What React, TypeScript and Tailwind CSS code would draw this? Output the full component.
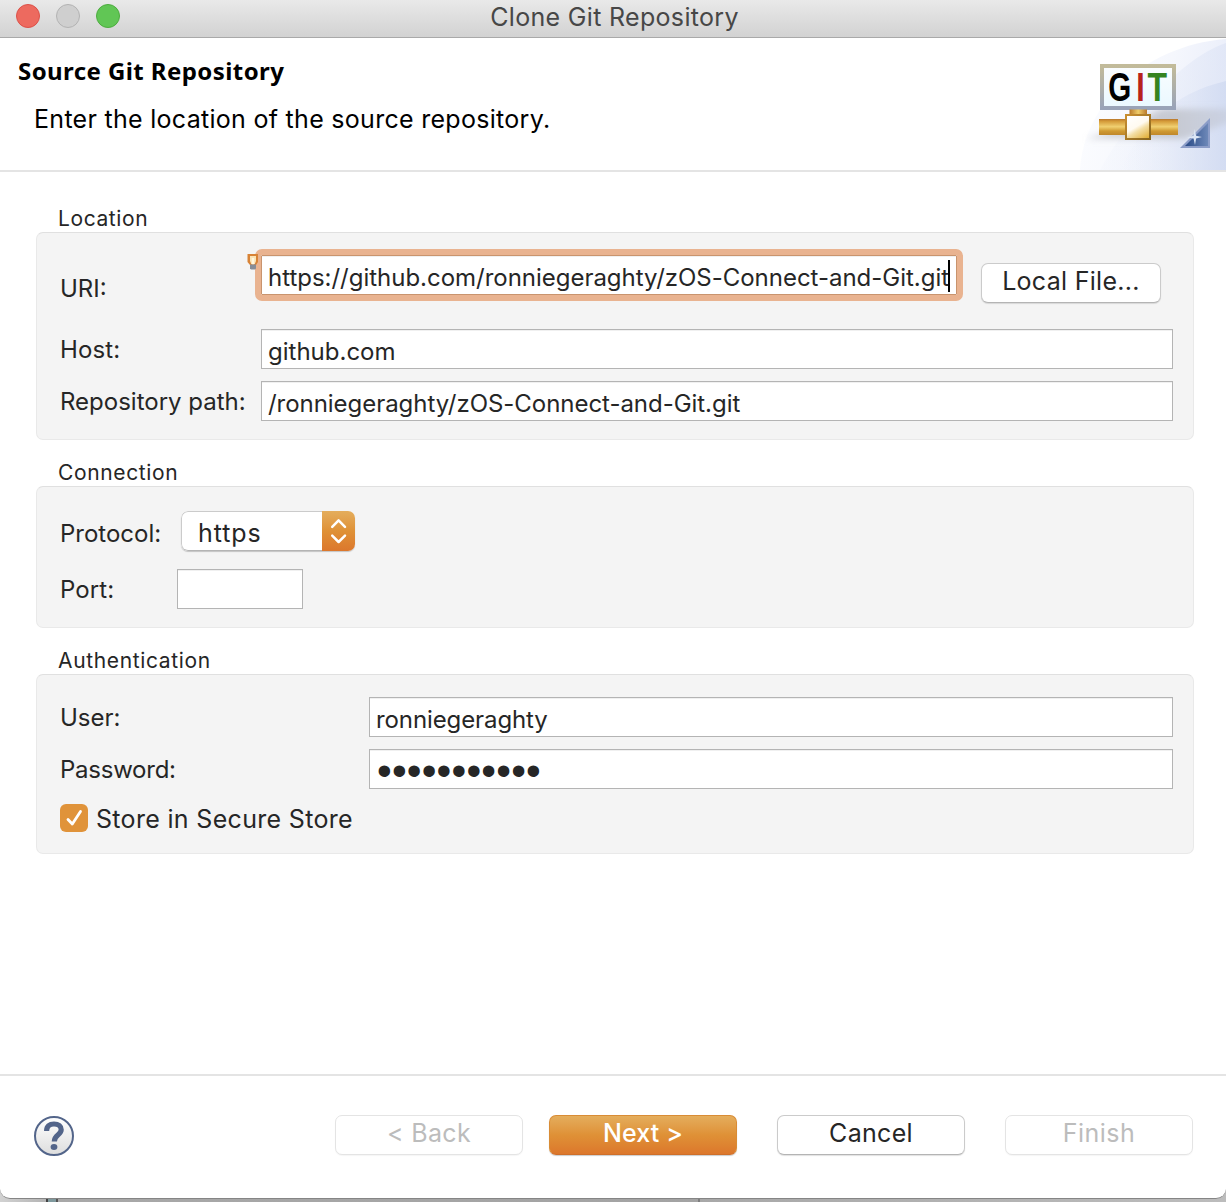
import React from "react";
import type { ReactNode } from "react";

function Group({ title, titleClass, className, children }: { title: string; titleClass: string; className: string; children: ReactNode }) {
  return (
    <section className="flex flex-col">
      <h2 className={`h-[28px] pl-[22px] text-[21px] leading-[30px] ${titleClass}`}>{title}</h2>
      <div className={`rounded-[7px] border border-[#e9e9e9] border-t-[#e0e0e0] bg-[#f4f4f4] pl-[23px] pr-5 ${className}`}>{children}</div>
    </section>
  );
}

function Field({ className, children }: { className: string; children?: ReactNode }) {
  return (
    <div className={`flex h-10 items-center border border-[#b4b4b4] bg-white pl-[6px] pt-[5px] text-2xl leading-8 whitespace-nowrap shadow-[inset_0_1px_0_#f0f0f0] ${className}`}>
      {children}
    </div>
  );
}

function Button({ className, children }: { className: string; children: ReactNode }) {
  return (
    <button className={`flex h-10 items-center justify-center rounded-[7px] border pb-[5px] text-[25px] leading-8 whitespace-nowrap ${className}`}>
      {children}
    </button>
  );
}

function Banner() {
  return (
    <svg className="block h-[132px] w-[146px]" viewBox="0 0 146 132">
      <defs>
        <linearGradient id="disc" x1="0" x2="1" y1="0.2" y2="0.4">
          <stop offset="0" stopColor="#fcfdff" />
          <stop offset="0.6" stopColor="#f5f7fd" />
          <stop offset="1" stopColor="#eaeefa" />
        </linearGradient>
        <linearGradient id="disc2" x1="0" x2="1">
          <stop offset="0" stopColor="#eef2fb" stopOpacity="0.3" />
          <stop offset="1" stopColor="#dce3f5" />
        </linearGradient>
        <linearGradient id="disc3" x1="0" x2="1">
          <stop offset="0" stopColor="#e8edf9" stopOpacity="0" />
          <stop offset="1" stopColor="#d0daf1" />
        </linearGradient>
        <linearGradient id="frame" x1="0" x2="0" y1="0" y2="1">
          <stop offset="0" stopColor="#c2bb9a" />
          <stop offset="1" stopColor="#99a3b8" />
        </linearGradient>
        <linearGradient id="glass" x1="0" x2="0" y1="0" y2="1">
          <stop offset="0" stopColor="#fafdff" />
          <stop offset="1" stopColor="#eaf8ff" />
        </linearGradient>
        <linearGradient id="pipe" x1="0" x2="0" y1="0" y2="1">
          <stop offset="0" stopColor="#b9772c" />
          <stop offset="0.15" stopColor="#d59c3a" />
          <stop offset="0.48" stopColor="#f0d071" />
          <stop offset="0.75" stopColor="#d09a32" />
          <stop offset="1" stopColor="#bf872b" />
        </linearGradient>
        <linearGradient id="stem" x1="0" x2="1">
          <stop offset="0" stopColor="#b9782a" />
          <stop offset="0.5" stopColor="#efcc68" />
          <stop offset="1" stopColor="#b9782a" />
        </linearGradient>
        <linearGradient id="boxEdge" x1="0" x2="1" y1="0" y2="1">
          <stop offset="0" stopColor="#c98f31" />
          <stop offset="1" stopColor="#87651e" />
        </linearGradient>
        <linearGradient id="box" x1="0.2" x2="0.8" y1="0" y2="1">
          <stop offset="0" stopColor="#ffffff" />
          <stop offset="0.46" stopColor="#fffaf0" />
          <stop offset="0.62" stopColor="#f4dfa6" />
          <stop offset="1" stopColor="#e2b13d" />
        </linearGradient>
        <linearGradient id="tri" x1="0" x2="1">
          <stop offset="0" stopColor="#284a86" />
          <stop offset="1" stopColor="#6d88b8" />
        </linearGradient>
        <linearGradient id="shade" x1="0" x2="1">
          <stop offset="0" stopColor="#b8bac0" stopOpacity="0.5" />
          <stop offset="0.6" stopColor="#b8bac0" stopOpacity="0.7" />
          <stop offset="1" stopColor="#bfc3cf" stopOpacity="0.45" />
        </linearGradient>
        <filter id="soft" x="-20%" y="-50%" width="140%" height="200%">
          <feGaussianBlur stdDeviation="3" />
        </filter>
      </defs>
      <path d="M0 132C3 70 60 8 146 1V132Z" fill="url(#disc)" />
      <path d="M20 132C40 95 95 22 146 5V132Z" fill="url(#disc2)" opacity="0.65" />
      <path d="M40 132C60 90 90 56 146 43V132Z" fill="url(#disc3)" opacity="0.8" />
      <path d="M6 101L50 86L80 71H150V84L104 101Z" fill="url(#shade)" filter="url(#soft)" />
      <rect x="22" y="28" width="72" height="42" fill="url(#glass)" stroke="url(#frame)" strokeWidth="4" />
      <rect x="49.5" y="71.5" width="17.5" height="6" fill="url(#stem)" />
      <rect x="19" y="81" width="79" height="16" fill="url(#pipe)" />
      <rect x="46" y="77" width="24" height="24" fill="url(#box)" stroke="url(#boxEdge)" strokeWidth="2" />
      <g fontFamily="Liberation Sans, sans-serif" fontWeight="700" fontSize="40">
        <text transform="translate(28.2 63) scale(0.74 1)" fill="#000000">G</text>
        <text transform="translate(56.2 63) scale(0.76 1)" fill="#b7221d">I</text>
        <text transform="translate(67.6 63) scale(0.8 1)" fill="#35831f">T</text>
      </g>
      <path d="M130 80V110H100Z" fill="#8c9dc8" />
      <path d="M128 85V108H105Z" fill="url(#tri)" />
      <path d="M114.6 91L116.1 97.8L122 99L116.1 100.4L115 107L113.6 100.4L107 99.6L113.6 97.8Z" fill="#dce6f5" />
    </svg>
  );
}

export default function App() {
  return (
    <div className="flex h-[1202px] w-[1226px] flex-col bg-[linear-gradient(90deg,#d2d2d2_0,#b4b4b4_46px,#444_46px,#444_48px,#7f999d_48px,#7f999d_56px,#555_56px,#555_58px,#a8a8a8_58px,#a3a3a3_698px,#7f7f7f_698px,#7f7f7f_700px,#a8a8a8_700px,#bcbcbc_1226px)] font-[Inter,sans-serif] text-[#262626]">
      <main className="flex h-[1199px] flex-col overflow-hidden rounded-b-[10px] border-b border-[#858585] bg-white">
        <header className="grid h-[38px] shrink-0 grid-cols-[1fr_auto_1fr] border-b border-[#a9a9a9] bg-linear-to-b from-[#e9e9e9] to-[#d2d2d2]">
          <div className="flex gap-4 pl-4 pt-1">
            <span className="size-6 rounded-full border border-[#dc5149] bg-[#ed6a5f]" />
            <span className="size-6 rounded-full border border-[#b3b3b3] bg-[#cfcfcf]" />
            <span className="size-6 rounded-full border border-[#4dac3f] bg-[#61c655]" />
          </div>
          <h1 className="pl-[3px] text-[25px] leading-[34px] tracking-[0.32px] text-[#474747]">Clone Git Repository</h1>
        </header>

        <div className="flex h-[134px] shrink-0 justify-between border-b-2 border-[#e4e4e4]">
          <div className="flex flex-col text-black">
            <p className="pl-[18px] pt-[17px] font-['Noto_Sans',sans-serif] text-2xl leading-8 font-bold tracking-[0.42px]">Source Git Repository</p>
            <p className="pl-[34px] pt-4 text-[25px] leading-8 tracking-[0.29px]">Enter the location of the source repository.</p>
          </div>
          <Banner />
        </div>

        <div className="flex grow flex-col gap-[18px] px-8 pl-9 pt-8">
          <Group title="Location" titleClass="tracking-[0.6px]" className="h-[208px] pt-[22px]">
            <div className="flex h-[74px]">
              <label className="w-[201px] pt-[18px] text-2xl leading-8">URI:</label>
              <div className="relative h-10 w-[696px]">
                <Field className="w-full border-[#c9946e] tracking-[-0.02px] outline-[6px] outline-[#e9b390] outline-solid rounded-[1px]">
                  https://github.com/ronniegeraghty/zOS-Connect-and-Git.git
                </Field>
                <span className="absolute left-[687px] top-[5px] h-8 w-0.5 bg-black" />
                <svg className="absolute -left-[14px] -top-[2px] h-[17px] w-3" viewBox="0 0 12 17">
                  <path d="M0.5 1H11V9L9 12H3L0.5 9Z" fill="#d88336" />
                  <path d="M3 3H9V8L7.8 11H4.2L3 8Z" fill="#fae3b5" />
                  <path d="M4.8 5H7.2V11.5H4.8Z" fill="#fff7df" />
                  <path d="M3 11.5H9V15.5L8 16.5H4L3 15.5Z" fill="#858d98" />
                </svg>
              </div>
              <Button className="mt-2 ml-6 w-[180px] border-[#cbcbcb] border-b-[#b4b4b4] bg-white tracking-[0.3px] shadow-[0_1px_1px_rgba(0,0,0,0.12)]">Local File...</Button>
            </div>
            <div className="flex items-center">
              <label className="w-[201px] pt-0.5 text-2xl leading-8 tracking-[0.1px]">Host:</label>
              <Field className="w-[912px]">github.com</Field>
            </div>
            <div className="mt-3 flex items-center">
              <label className="w-[201px] pt-0.5 text-2xl leading-8">Repository path:</label>
              <Field className="w-[912px] tracking-[-0.04px]">/ronniegeraghty/zOS-Connect-and-Git.git</Field>
            </div>
          </Group>

          <Group title="Connection" titleClass="tracking-[0.64px]" className="h-[142px] pt-6">
            <div className="flex items-center">
              <label className="w-[121px] pt-1.5 text-2xl leading-8">Protocol:</label>
              <div className="flex h-10 w-[174px] overflow-hidden rounded-[7px] bg-white shadow-[0_1px_1px_rgba(0,0,0,0.2)]">
                <span className="grow rounded-l-[7px] border border-r-0 border-[#cbcbcb] border-b-[#b4b4b4] pl-4 text-[25px] leading-[43px] tracking-[0.9px]">https</span>
                <span className="flex w-[33px] items-center justify-center bg-linear-to-b from-[#e4ad5c] via-[#df9136] to-[#dc772c]">
                  <svg className="h-[26px] w-[18px]" viewBox="0 0 18 26" fill="none" stroke="#ffffff" strokeWidth="2.5" strokeLinecap="round" strokeLinejoin="round">
                    <path d="M2.2 8.8L8.6 2.4L15 8.8M2.2 17.6L8.6 24L15 17.6" />
                  </svg>
                </span>
              </div>
            </div>
            <div className="mt-[18px] flex items-center">
              <label className="w-[117px] pt-0.5 text-2xl leading-8 tracking-[0.1px]">Port:</label>
              <Field className="w-[126px]" />
            </div>
          </Group>

          <Group title="Authentication" titleClass="tracking-[0.65px]" className="h-[180px] pt-[22px]">
            <div className="flex items-center">
              <label className="w-[309px] pt-0.5 text-2xl leading-8">User:</label>
              <Field className="w-[804px] tracking-[-0.1px]">ronniegeraghty</Field>
            </div>
            <div className="mt-3 flex items-center">
              <label className="w-[309px] pt-0.5 text-2xl leading-8 tracking-[-0.25px]">Password:</label>
              <Field className="w-[804px]">
                <span className="-mt-0.5 pl-px font-['Liberation_Sans',sans-serif] text-[42px] leading-8 tracking-[0.2px]">•••••••••••</span>
              </Field>
            </div>
            <label className="mt-3 flex items-center gap-2 text-[25px] leading-8 tracking-[0.32px]">
              <span className="flex size-7 items-center justify-center rounded-[6px] bg-[#e0933a]">
                <svg className="size-5" viewBox="0 0 20 20" fill="none" stroke="#ffffff" strokeWidth="2.8" strokeLinecap="round" strokeLinejoin="round">
                  <path d="M4 11.5L8.3 16L16.5 3.5" />
                </svg>
              </span>
              <span className="pt-0.5">Store in Secure Store</span>
            </label>
          </Group>
        </div>

        <footer className="flex h-[124px] shrink-0 items-start border-t-2 border-[#e4e4e4] pl-[34px] pt-[39px]">
          <span className="mt-px flex size-10 items-center justify-center rounded-full border-2 border-[#53658a] bg-linear-to-b from-white to-[#dedede]">
            <svg className="h-[30px] w-5" viewBox="0 0 20 30">
              <path d="M2.6 10C2.6 5 5.5 3 10 3S17.2 5.2 17.2 8.8C17.2 14 10.3 13.5 10.3 20.5" fill="none" stroke="#53658a" strokeWidth="5.2" />
              <ellipse cx="10" cy="26" rx="3.4" ry="3" fill="#53658a" />
            </svg>
          </span>
          <Button className="ml-[261px] w-[188px] border-[#e4e4e4] bg-white tracking-[0.35px] text-[#bcbcbc] shadow-[0_1px_1px_rgba(0,0,0,0.04)]">&lt; Back</Button>
          <Button className="ml-[26px] w-[188px] border-[#d98c35] border-b-[#cf6f29] bg-linear-to-b from-[#e4ad5c] via-[#df9136] to-[#dc772c] font-medium tracking-[0.1px] text-white shadow-[0_1px_1px_rgba(0,0,0,0.2)]">Next &gt;</Button>
          <Button className="ml-10 w-[188px] border-[#cbcbcb] border-b-[#b4b4b4] bg-white tracking-[0.3px] shadow-[0_1px_1px_rgba(0,0,0,0.12)]">Cancel</Button>
          <Button className="ml-10 w-[188px] border-[#e4e4e4] bg-white tracking-[0.5px] text-[#bcbcbc] shadow-[0_1px_1px_rgba(0,0,0,0.04)]">Finish</Button>
        </footer>
      </main>
    </div>
  );
}
